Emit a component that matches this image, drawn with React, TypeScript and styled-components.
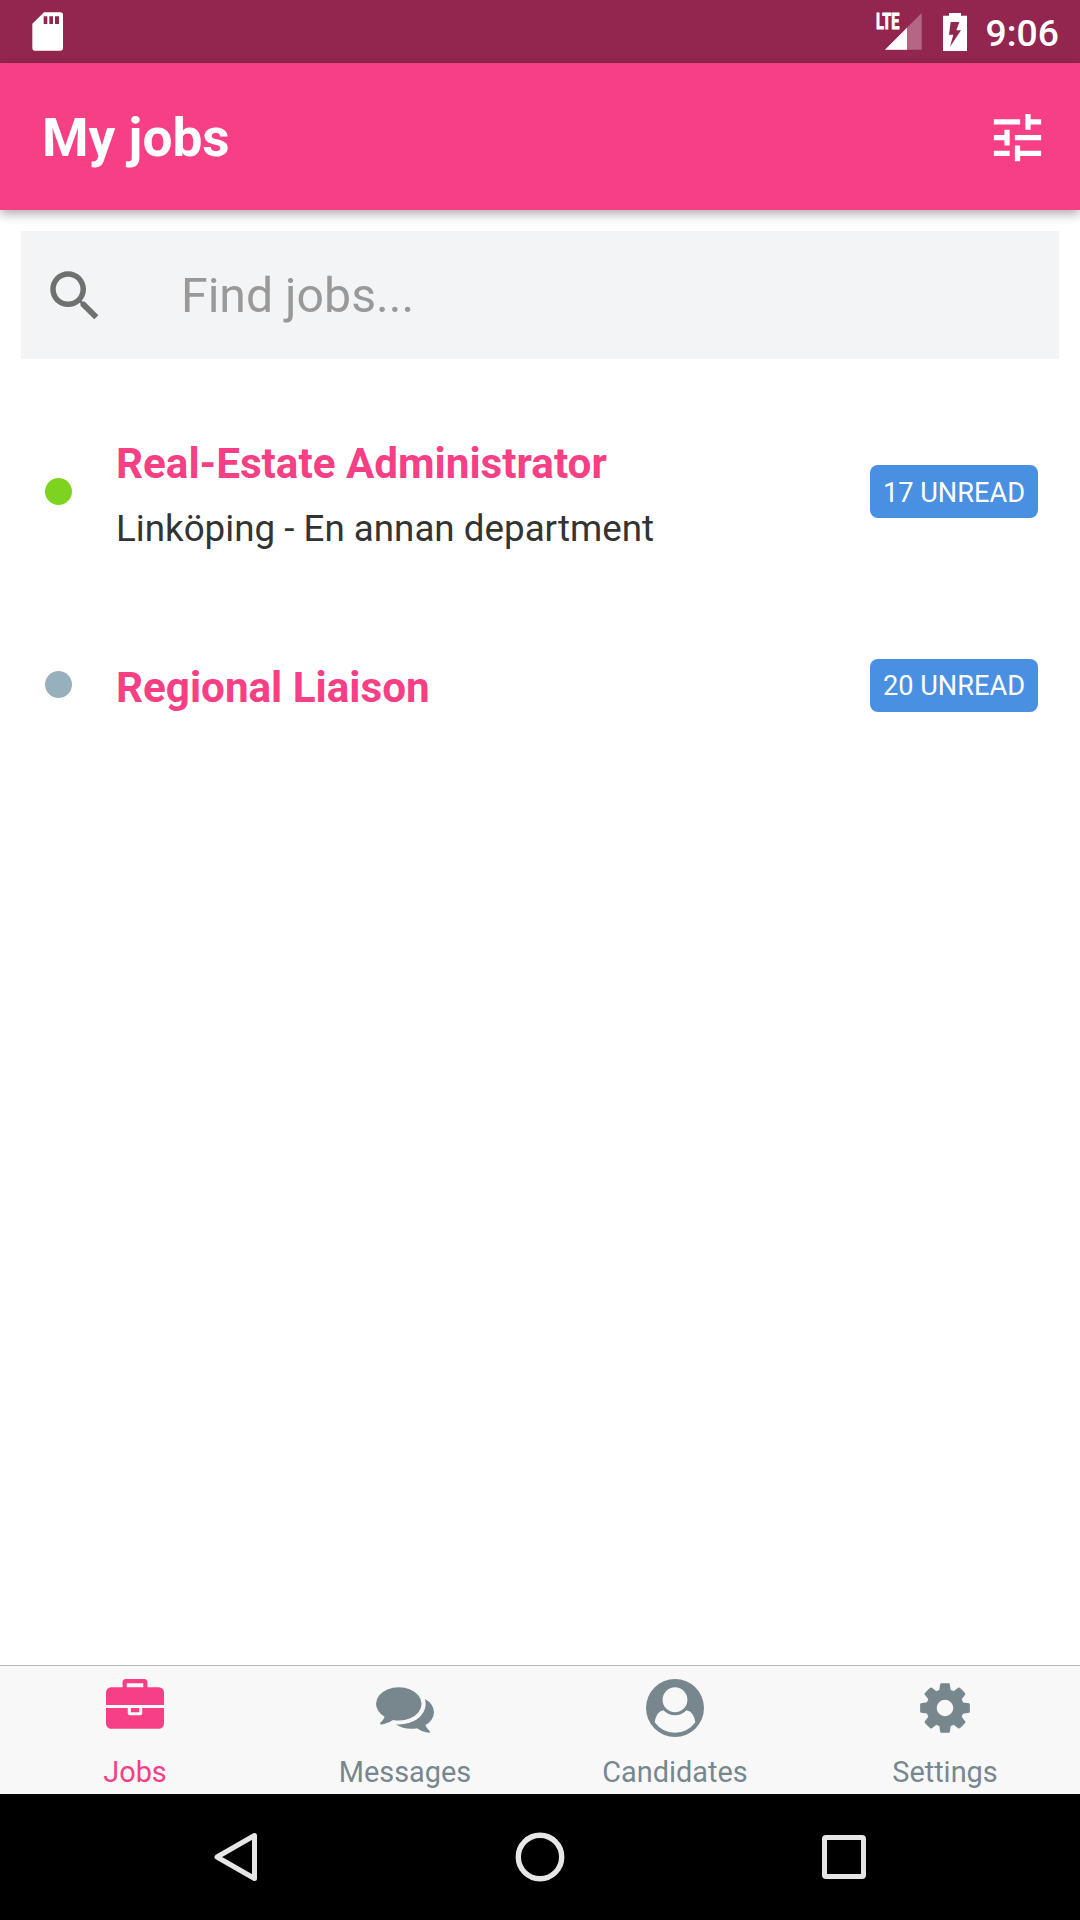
import React from "react";
import styled, { createGlobalStyle } from "styled-components";

const PINK = "#f63f85";
const SLATE = "#78878e";

const GlobalStyle = createGlobalStyle`
  body {
    margin: 0;
    background: #fff;
    font-family: Roboto, "Liberation Sans", sans-serif;
  }
  * {
    box-sizing: border-box;
  }
  svg {
    display: block;
    flex: none;
  }
`;

const Screen = styled.div`
  width: 1080px;
  height: 1920px;
  display: flex;
  flex-direction: column;
  background: #fff;
  overflow: hidden;
`;

const StatusBar = styled.div`
  height: 63px;
  flex: none;
  display: flex;
  align-items: center;
  padding: 0 21px 0 32px;
  background: #93264f;
`;

const StatusIcons = styled.div`
  margin-left: auto;
  display: flex;
  align-items: center;
`;

const Signal = styled.div`
  display: flex;
  align-items: flex-start;
  width: 46px;
  height: 63px;
  margin-right: 21px;
`;

const NetworkType = styled.span`
  width: 9px;
  padding-top: 9px;
  font-size: 22px;
  font-weight: 700;
  line-height: 26px;
  color: #fff;
  -webkit-text-stroke: 0.9px #fff;
  white-space: nowrap;
  transform: scaleX(0.66);
  transform-origin: 0 0;
`;

const SignalDrawing = styled.svg`
  margin-top: 13px;
`;

const Clock = styled.span`
  margin-left: 19px;
  font-size: 37.3px;
  line-height: 43px;
  font-weight: 500;
  color: #fff;
  padding-top: 3px;
`;

const Header = styled.header`
  position: relative;
  height: 147px;
  flex: none;
  display: flex;
  align-items: center;
  justify-content: space-between;
  padding: 2px 31px 0 42px;
  background: ${PINK};
  box-shadow: 0 4px 10px rgba(0, 0, 0, 0.32);
`;

const Title = styled.h1`
  margin: 0;
  font-size: 53.2px;
  line-height: 62px;
  font-weight: 700;
  color: #fff;
`;

const SearchField = styled.div`
  height: 128px;
  flex: none;
  margin: 21px 21px 0;
  padding: 2px 21px 0;
  display: flex;
  align-items: center;
  gap: 73px;
  background: #f3f4f6;
`;

const Placeholder = styled.span`
  font-size: 48.2px;
  line-height: 56px;
  color: #999;
`;

const JobList = styled.main`
  flex: 1;
  display: flex;
  flex-direction: column;
  gap: 33.5px;
  padding: 40px 42px 0 45px;
`;

const JobRow = styled.article`
  display: flex;
  align-items: center;
  padding: 40px 0;
`;

const StatusDot = styled.span<{ $color: string }>`
  width: 27px;
  height: 27px;
  margin: 0 44px 6px 0;
  border-radius: 50%;
  background: ${(p) => p.$color};
`;

const JobText = styled.div`
  flex: 1;
  display: flex;
  flex-direction: column;
  gap: 19.5px;
`;

const JobTitle = styled.h2`
  margin: 0;
  font-size: 42.2px;
  line-height: 49px;
  font-weight: 700;
  color: ${PINK};
`;

const JobPlace = styled.span`
  font-size: 36.75px;
  line-height: 42px;
  color: #333;
`;

const Badge = styled.span`
  height: 53px;
  width: 168px;
  margin-top: -5px;
  display: flex;
  align-items: center;
  justify-content: center;
  padding-top: 2px;
  border-radius: 8px;
  background: #4a90e2;
  font-size: 27.2px;
  color: #fff;
  white-space: nowrap;
`;

const TabBar = styled.nav`
  height: 129px;
  flex: none;
  display: grid;
  grid-template-columns: repeat(4, 1fr);
  border-top: 1px solid #b5bab8;
  background: #f8f8f8;
`;

const Tab = styled.div<{ $active?: boolean }>`
  display: flex;
  flex-direction: column;
  align-items: center;
  padding-top: 13px;
  gap: 18px;
  color: ${(p) => (p.$active ? PINK : SLATE)};
`;

const TabLabel = styled.span`
  font-size: 28.875px;
  line-height: 34px;
`;

const NavBar = styled.div`
  height: 126px;
  flex: none;
  display: flex;
  align-items: center;
  justify-content: center;
  gap: 244px;
  background: #000;
`;

const SdCard = () => (
  <svg width="32" height="40" viewBox="96 36 96 120" fill="#fff">
    <path
      fillRule="evenodd"
      d="M132 37H181Q189 37 189 45V144Q189 152 181 152H105Q97 152 97 144V71ZM131 49V72H142V49ZM148 49V72H159V49ZM165 49V72H177V49Z"
    />
  </svg>
);

const SignalIcon = () => (
  <SignalDrawing width="37" height="37" viewBox="134 39 111 111" fill="#fff">
    <path d="M134 149L244 39V149Z" opacity=".3" />
    <path d="M134 149L200 83V149Z" />
  </SignalDrawing>
);

const Battery = () => (
  <svg width="24" height="38" viewBox="309 36 72 114" fill="#fff">
    <path
      fillRule="evenodd"
      d="M327 36H363V44H381V150H309V44H327ZM332 63L327 101H340L330 137L363 88H349L358 63Z"
    />
  </svg>
);

const Tune = () => (
  <svg width="63" height="63" viewBox="0 0 24 24" fill="#fff">
    <path d="M3 17v2h6v-2H3zM3 5v2h10V5H3zm10 16v-2h8v-2h-8v-2h-2v6h2zM7 9v2H3v2h4v2h2V9H7zm14 4v-2H11v2h10zm-6-4h2V7h4V5h-4V3h-2v6z" />
  </svg>
);

const Magnifier = () => (
  <svg width="66" height="66" viewBox="0 0 24 24" fill="#6f7070">
    <path d="M15.5 14h-.79l-.28-.27C15.41 12.59 16 11.11 16 9.5 16 5.91 13.09 3 9.5 3S3 5.91 3 9.5 5.91 16 9.5 16c1.61 0 3.09-.59 4.23-1.57l.27.28v.79l5 4.99L20.49 19l-4.99-5zm-6 0C7.01 14 5 11.99 5 9.5S7.01 5 9.5 5 14 7.01 14 9.5 11.99 14 9.5 14z" />
  </svg>
);

const icons = {
  briefcase:
    "M640 256h512v-128h-512v128zm1152 640v480q0 66-47 113t-113 47h-1472q-66 0-113-47t-47-113v-480h672v160q0 26 19 45t45 19h320q26 0 45-19t19-45v-160h672zm-768 0v128h-256v-128h256zm768-480v384h-1792v-384q0-66 47-113t113-47h352v-160q0-40 28-68t68-28h576q40 0 68 28t28 68v160h352q66 0 113 47t47 113z",
  comments:
    "M1408 768q0 139-94 257t-256.5 186.500-353.500 68.500q-86 0-176-16-124 88-278 128-36 9-86 16h-3q-11 0-20.500-8t-11.500-21q-1-3-1-6.500t.5-6.500 2-6l2.500-5 3.500-5.500 4-5 4.500-5 4-4.500q5-6 23-25t26-29.500 22.500-29 25-38.500 20.500-44q-124-72-195-177t-71-224q0-139 94-257t256.500-186.500 353.500-68.500 353.500 68.500 256.500 186.500 94 257zm384 256q0 120-71 224.500t-195 176.500q10 24 20.500 44t25 38.500 22.500 29 26 29.500 23 25q1 1 4 4.500t4.500 5 4 5 3.500 5.500l2.500 5 2 6 .5 6.500-1 6.500q-3 14-13 22t-22 7q-50-7-86-16-154-40-278-128-90 16-176 16-271 0-472-132 58 4 88 4 161 0 309-45t264-129q125-92 192-212t67-254q0-77-23-152 129 71 204 178t75 230z",
  person:
    "M1523 1339q-22-155-87.5-257.500t-184.500-118.500q-67 74-159.500 115.500t-195.500 41.500-195.500-41.500-159.500-115.500q-119 16-184.500 118.500t-87.500 257.500q106 150 271 237.500t356 87.500 356-87.500 271-237.500zm-243-699q0-159-112.500-271.500t-271.500-112.500-271.500 112.500-112.500 271.500 112.500 271.500 271.500 112.500 271.500-112.500 112.500-271.500zm512 256q0 182-71 347.500t-190.500 286-285.500 191.500-349 71q-182 0-348-71t-286-191-191-286-71-348 71-348 191-286 286-191 348-71 348 71 286 191 191 286 71 348z",
  cog: "M1152 896q0-106-75-181t-181-75-181 75-75 181 75 181 181 75 181-75 75-181zm512-109v222q0 12-8 23t-20 13l-185 28q-19 54-39 91 35 50 107 138 10 12 10 25t-9 23q-27 37-99 108t-94 71q-12 0-26-9l-138-108q-44 23-91 38-16 136-29 186-7 28-36 28h-222q-14 0-24.500-8.500t-11.500-21.500l-28-184q-49-16-90-37l-141 107q-10 9-25 9-14 0-25-11-126-114-165-168-7-10-7-23 0-12 8-23 15-21 51-66.500t54-70.500q-27-50-41-99l-183-27q-13-2-21-12.500t-8-23.500v-222q0-12 8-23t19-13l186-28q14-46 39-92-40-57-107-138-10-12-10-24 0-10 9-23 26-36 98.500-107.500t94.500-71.500q13 0 26 10l138 107q44-23 91-38 16-136 29-186 7-28 36-28h222q14 0 24.500 8.500t11.500 21.500l28 184q49 16 90 37l142-107q9-9 24-9 13 0 25 10 129 119 165 170 7 8 7 22 0 12-8 23-15 21-51 66.500t-54 70.500q26 50 41 98l183 28q13 2 21 12.500t8 23.500z",
};

const TabIcon = ({ name }: { name: keyof typeof icons }) => (
  <svg width="58" height="58" viewBox="0 0 1792 1792" fill="currentColor">
    <path fillRule="evenodd" d={icons[name]} />
  </svg>
);

const jobs = [
  {
    title: "Real-Estate Administrator",
    place: "Linköping - En annan department",
    unread: 17,
    color: "#7ed321",
  },
  { title: "Regional Liaison", place: "", unread: 20, color: "#98afbd" },
];

const tabs: { label: string; icon: keyof typeof icons }[] = [
  { label: "Jobs", icon: "briefcase" },
  { label: "Messages", icon: "comments" },
  { label: "Candidates", icon: "person" },
  { label: "Settings", icon: "cog" },
];

export default function App() {
  return (
    <Screen>
      <GlobalStyle />
      <StatusBar>
        <SdCard />
        <StatusIcons>
          <Signal>
            <NetworkType>LTE</NetworkType>
            <SignalIcon />
          </Signal>
          <Battery />
          <Clock>9:06</Clock>
        </StatusIcons>
      </StatusBar>
      <Header>
        <Title>My jobs</Title>
        <Tune />
      </Header>
      <SearchField>
        <Magnifier />
        <Placeholder>Find jobs...</Placeholder>
      </SearchField>
      <JobList>
        {jobs.map((job) => (
          <JobRow key={job.title}>
            <StatusDot $color={job.color} />
            <JobText>
              <JobTitle>{job.title}</JobTitle>
              {job.place && <JobPlace>{job.place}</JobPlace>}
            </JobText>
            <Badge>{job.unread} UNREAD</Badge>
          </JobRow>
        ))}
      </JobList>
      <TabBar>
        {tabs.map((tab, i) => (
          <Tab key={tab.label} $active={i === 0}>
            <TabIcon name={tab.icon} />
            <TabLabel>{tab.label}</TabLabel>
          </Tab>
        ))}
      </TabBar>
      <NavBar>
        <svg width="60" height="60" viewBox="0 0 60 60" fill="none" stroke="#e6e6e6">
          <path d="M48.500 8.500V51.500L11 30Z" strokeWidth="5" strokeLinejoin="round" />
        </svg>
        <svg width="60" height="60" viewBox="0 0 60 60" fill="none" stroke="#e6e6e6">
          <circle cx="30" cy="30" r="21.700" strokeWidth="5.400" />
        </svg>
        <svg width="60" height="60" viewBox="0 0 60 60" fill="none" stroke="#e6e6e6">
          <rect x="10.500" y="10.500" width="39" height="39" rx="1.500" strokeWidth="5" />
        </svg>
      </NavBar>
    </Screen>
  );
}
